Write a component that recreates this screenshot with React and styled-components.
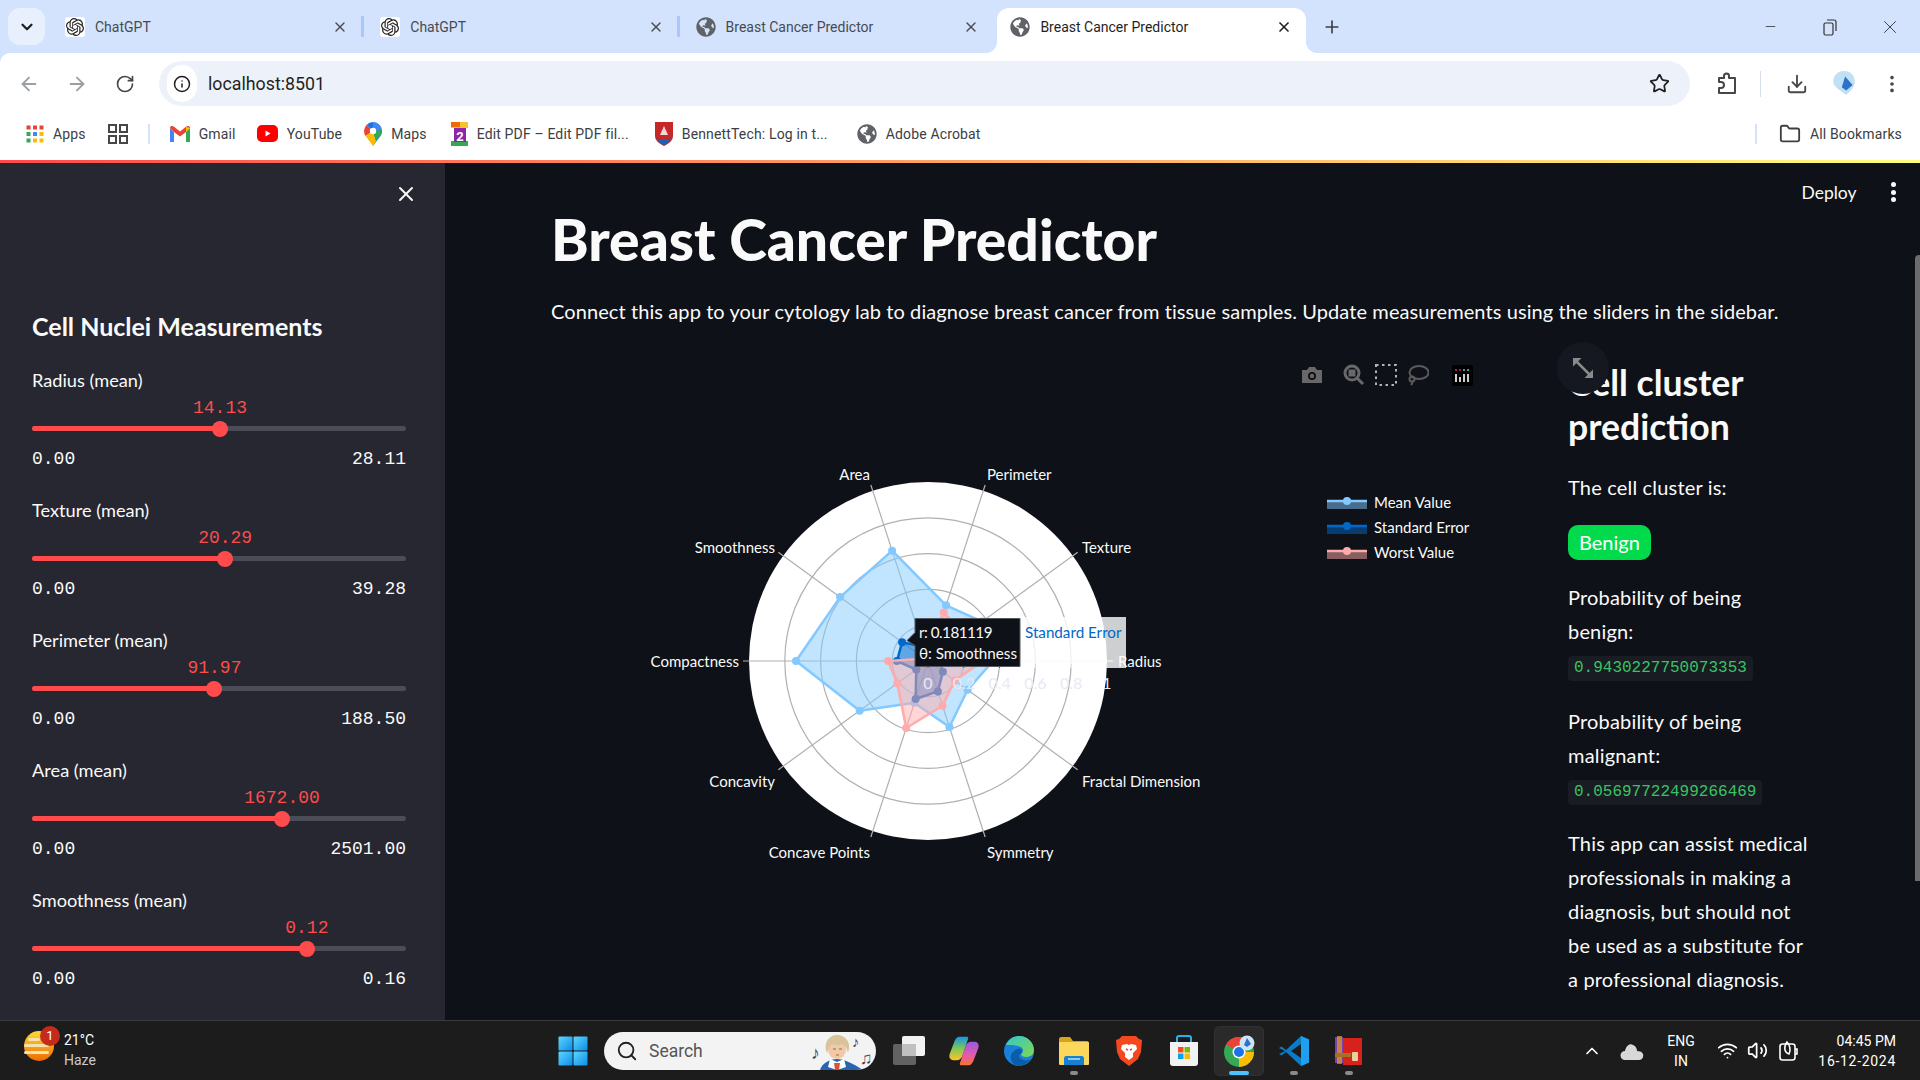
import React from 'react';
import styled, { createGlobalStyle } from 'styled-components';
import { SiOpenai } from 'react-icons/si';
import { FaGlobeAmericas } from 'react-icons/fa';
import { ArrowLeft, ArrowRight, RotateCw, Info, Star, Download, EllipsisVertical, X, Plus, Minus, ChevronDown, ChevronUp, Search, Folder, Wifi, Volume2 } from 'lucide-react';

const GlobalStyle = createGlobalStyle`
  html, body { margin: 0; padding: 0; width: 1920px; height: 1080px; overflow: hidden; }
  body { font-family: Lato, "Noto Sans", sans-serif; background: #0e1117; }
  * { box-sizing: border-box; }
`;

const Page = styled.div`
  width: 1920px;
  height: 1080px;
  display: flex;
  flex-direction: column;
  overflow: hidden;
  background: #d3e3fd;
`;

/* ---------- browser chrome ---------- */

const TabStrip = styled.div`
  height: 53px;
  background: #d3e3fd;
  display: flex;
  align-items: flex-end;
  padding-left: 8px;
  position: relative;
  font-family: Roboto, sans-serif;
`;

const TabSearch = styled.div`
  width: 37px;
  height: 37px;
  margin: 0 4px 8px 0;
  border-radius: 12px;
  background: #e9f0fd;
  display: flex;
  align-items: center;
  justify-content: center;
  color: #1f1f1f;
`;

const Tab = styled.div`
  width: ${p => p.$active ? '309px' : '315.3px'};
  height: 45px;
  margin-left: ${p => p.$active ? '2px' : '0'};
  padding: ${p => p.$active ? '0 14px 8px 13.5px' : '0 16px 8px 16px'};
  display: flex;
  align-items: center;
  gap: 10px;
  background: ${p => p.$active ? '#fff' : 'transparent'};
  border-radius: 12px 12px 0 0;
  position: relative;
  color: ${p => p.$active ? '#1f1f1f' : '#474b50'};
  font-size: 14px;
  ${p => p.$active && `
    &::before, &::after {
      content: '';
      position: absolute;
      bottom: 0;
      width: 12px;
      height: 12px;
    }
    &::before {
      left: -12px;
      background: radial-gradient(circle at 0 0, transparent 12px, #fff 12.5px);
    }
    &::after {
      right: -12px;
      background: radial-gradient(circle at 100% 0, transparent 12px, #fff 12.5px);
    }
  `}
`;

const TabDivider = styled.span`
  position: absolute;
  right: 0;
  top: 8px;
  width: 3px;
  height: 21px;
  background: #a8c7fa;
  border-radius: 1px;
`;

const TabTitle = styled.span`
  flex: 1;
  white-space: nowrap;
`;

const NewTab = styled.div`
  width: 20px;
  height: 20px;
  margin: 0 0 16px 16px;
  color: #3c4043;
  display: flex;
`;

const WindowControls = styled.div`
  position: absolute;
  right: 0;
  top: 0;
  height: 53px;
  width: 180px;
  display: flex;
  align-items: center;
  color: #333;
`;

const WinButton = styled.div`
  width: 60px;
  display: flex;
  justify-content: center;
`;

const Toolbar = styled.div`
  height: 54px;
  padding-top: 7px;
  background: #fff;
  border-radius: 10px 0 0 0;
  display: flex;
  align-items: center;
  font-family: Roboto, sans-serif;
`;

const NavButtons = styled.div`
  width: 159px;
  padding-left: 17px;
  display: flex;
  gap: 24px;
`;

const NavIcon = styled.div`
  width: 24px;
  height: 24px;
  display: flex;
  align-items: center;
  justify-content: center;
  color: ${p => p.$muted ? '#9aa0a6' : '#474747'};
`;

const Omnibox = styled.div`
  width: 1531px;
  height: 45px;
  background: #edf2fa;
  border-radius: 23px;
  display: flex;
  align-items: center;
  padding: 0 20px 0 8px;
`;

const SiteInfo = styled.div`
  width: 30px;
  height: 37px;
  border-radius: 18px;
  background: #fff;
  display: flex;
  align-items: center;
  justify-content: center;
  color: #1f1f1f;
`;

const Url = styled.span`
  margin-left: 11px;
  flex: 1;
  font-size: 17.8px;
  color: #1f1f1f;
`;

const ToolbarRight = styled.div`
  flex: 1;
  display: flex;
  align-items: center;
  padding-left: 25px;
  color: #474747;
`;

const ToolSep = styled.div`
  width: 1px;
  height: 26px;
  background: #d5dfee;
  margin: 0 25px 0 21px;
`;

const Bookmarks = styled.div`
  height: 53px;
  background: #fff;
  display: flex;
  align-items: center;
  padding: 0 18px 0 26px;
  font-family: Roboto, sans-serif;
  font-size: 14px;
  letter-spacing: 0.15px;
  color: #3c4043;
`;

const Bookmark = styled.div`
  display: flex;
  align-items: center;
  gap: ${p => p.$gap ?? 9}px;
  margin-right: ${p => p.$after ?? 24}px;
  white-space: nowrap;
`;

const BookSep = styled.div`
  width: 2px;
  height: 20px;
  background: #d3e3fd;
  margin: ${p => p.$margin};
`;

const Rainbow = styled.div`
  height: 3px;
  background: linear-gradient(90deg, rgb(255, 75, 75), rgb(255, 253, 128));
`;

/* ---------- streamlit app ---------- */

const AppBody = styled.div`
  flex: 1;
  min-height: 0;
  display: flex;
  position: relative;
  background: #0e1117;
  color: #fafafa;
`;

const Sidebar = styled.aside`
  width: 445px;
  flex: none;
  background: #262730;
  padding: 0 39px 0 32px;
  overflow: hidden;
`;

const SidebarTop = styled.div`
  height: 62px;
  display: flex;
  align-items: center;
  justify-content: flex-end;
  color: #fafafa;
  margin-right: -12px;
`;

const SidebarTitle = styled.h2`
  margin: 83px 0 23.5px;
  font-size: 25px;
  line-height: 36px;
  font-weight: 700;
  white-space: nowrap;
`;

const SliderList = styled.div`
  display: flex;
  flex-direction: column;
  gap: 27.1px;
`;

const SliderBlock = styled.div`
  display: flex;
  flex-direction: column;
`;

const SliderLabel = styled.label`
  height: 24px;
  line-height: 24px;
  font-size: 18.2px;
`;

const SliderArea = styled.div`
  height: 43px;
  position: relative;
`;

const SliderValue = styled.span`
  position: absolute;
  top: 5px;
  transform: translateX(-50%);
  font-family: "Liberation Mono", monospace;
  font-size: 18px;
  line-height: 22px;
  color: #ff4b4b;
`;

const Track = styled.div`
  position: absolute;
  left: 0;
  right: 0;
  bottom: 3.5px;
  height: 5px;
  border-radius: 3px;
  background: #4a4c58;
`;

const TrackFill = styled.div`
  height: 100%;
  border-radius: 3px;
  background: #ff4b4b;
`;

const Thumb = styled.div`
  position: absolute;
  top: -5.5px;
  width: 16px;
  height: 16px;
  margin-left: -8px;
  border-radius: 50%;
  background: #ff4b4b;
`;

const Limits = styled.div`
  margin-top: 12px;
  height: 24px;
  display: flex;
  justify-content: space-between;
  font-family: "Liberation Mono", monospace;
  font-size: 18px;
  line-height: 24px;
`;

const Main = styled.main`
  flex: 1;
  padding: 43px 0 0 106px;
  overflow: hidden;
`;

const Title = styled.h1`
  margin: 0;
  font-size: 57px;
  line-height: 66px;
  font-weight: 900;
  white-space: nowrap;
`;

const Lead = styled.p`
  margin: 22px 0 0;
  font-size: 20px;
  line-height: 34px;
  letter-spacing: 0.09px;
  white-space: nowrap;
`;

const Columns = styled.div`
  margin: 12px 0 0 1px;
  display: flex;
`;

const ChartColumn = styled.div`
  width: 1016px;
  height: 640px;
  flex: none;
  position: relative;
`;

const ModeBar = styled.div`
  position: absolute;
  top: 23px;
  left: 739px;
  display: flex;
  align-items: center;
`;

const ModeIcon = styled.div`
  width: ${p => p.$w}px;
  height: 24px;
  display: flex;
  align-items: center;
  justify-content: center;
`;

const Prediction = styled.section`
  padding-top: 21px;
  width: 260px;
  flex: none;
`;

const PredHeading = styled.h2`
  margin: 0 0 20.5px;
  font-size: 35.6px;
  line-height: 44px;
  font-weight: 700;
`;

const PredText = styled.p`
  margin: ${p => p.$top || 0}px 0 0;
  font-size: 20px;
  line-height: 34px;
  letter-spacing: 0.18px;
  white-space: nowrap;
`;

const Badge = styled.div`
  display: inline-block;
  margin-top: 21.5px;
  height: 35px;
  padding: 0 11px;
  line-height: 35px;
  font-size: 20px;
  border-radius: 10px;
  background: #01db4b;
  color: #fff;
`;

const CodeValue = styled.code`
  display: table;
  margin-top: 8px;
  height: 25px;
  padding: 0 6px;
  line-height: 25px;
  font-family: "Liberation Mono", monospace;
  font-size: 16px;
  border-radius: 4px;
  background: #1a1c24;
  color: #37c463;
`;

const Header = styled.div`
  position: absolute;
  top: 14px;
  right: 24.5px;
  height: 30px;
  display: flex;
  align-items: center;
  gap: 34px;
  font-size: 17.5px;
`;

const Kebab = styled.div`
  display: flex;
  flex-direction: column;
  gap: 2.5px;
  span { width: 5px; height: 5px; border-radius: 50%; background: #fafafa; }
`;

const FullscreenButton = styled.div`
  position: absolute;
  left: 1557px;
  top: 179px;
  width: 52px;
  height: 52px;
  border-radius: 50%;
  background: #151820;
  display: flex;
  align-items: center;
  justify-content: center;
`;

const ScrollThumb = styled.div`
  position: absolute;
  right: 0;
  top: 92px;
  width: 5px;
  height: 626px;
  background: #6b6b6e;
  border-radius: 4px 0 0 0;
`;

/* ---------- taskbar ---------- */

const Taskbar = styled.footer`
  height: 60px;
  flex: none;
  background: #1c1c1c;
  border-top: 1px solid #3a3a3a;
  display: flex;
  align-items: center;
  font-family: Roboto, sans-serif;
  color: #fff;
  position: relative;
`;

const Weather = styled.div`
  width: 550px;
  flex: none;
  padding-left: 24px;
  display: flex;
  align-items: center;
  gap: 9px;
`;

const WeatherIcon = styled.div`
  position: relative;
  width: 31px;
  height: 30px;
`;

const Notify = styled.span`
  position: absolute;
  left: 16px;
  top: -10px;
  width: 20px;
  height: 20px;
  border-radius: 50%;
  background: #c42b1c;
  font-size: 13px;
  line-height: 20px;
  text-align: center;
`;

const WeatherText = styled.div`
  font-size: 14px;
  line-height: 20px;
  margin-top: -1px;
  span { display: block; color: #ccc; }
`;

const StartCell = styled.div`
  width: 45px;
  margin-right: 9px;
  display: flex;
  justify-content: center;
`;

const SearchPill = styled.div`
  width: 272px;
  height: 38px;
  border-radius: 19px;
  background: #f3f3f3;
  display: flex;
  align-items: center;
  padding-left: 12px;
  gap: 11px;
  color: #555;
  font-size: 17.5px;
  position: relative;
  overflow: hidden;
`;

const SearchArt = styled.div`
  position: absolute;
  right: 0;
  top: 0;
  height: 38px;
  width: 70px;
`;

const Notes = styled.span`
  position: absolute;
  left: ${p => p.$x}px;
  top: ${p => p.$y}px;
  font-size: ${p => p.$size}px;
  color: #4a3a50;
  line-height: 1;
`;

const AppRow = styled.div`
  display: flex;
  align-items: center;
  margin-left: 5px;
`;

const AppCell = styled.div`
  width: 55px;
  height: 50px;
  display: flex;
  align-items: center;
  justify-content: center;
  position: relative;
  &::before {
    content: '';
    display: ${p => p.$current ? 'block' : 'none'};
    position: absolute;
    left: 2.5px;
    right: 2.5px;
    top: 0;
    bottom: 0;
    border-radius: 5px;
    background: #2a2a2a;
    border: 1px solid #303030;
  }
  svg { position: relative; }
`;

const RunDot = styled.span`
  position: absolute;
  bottom: 1px;
  left: 50%;
  width: ${p => p.$current ? 20 : 8}px;
  margin-left: ${p => p.$current ? -10 : -4}px;
  height: 4px;
  border-radius: 2px;
  background: ${p => p.$current ? '#4cc2ff' : '#8a8a8a'};
`;

const Tray = styled.div`
  position: absolute;
  right: 24px;
  top: 0;
  height: 59px;
  display: flex;
  align-items: center;
  font-size: 14px;
`;

const TrayStack = styled.div`
  text-align: ${p => p.$align};
  line-height: 20px;
  white-space: nowrap;
  margin-left: ${p => p.$left}px;
  font-size: ${p => p.$size || 14}px;
`;

const ClockDate = styled.span`
  letter-spacing: 0.7px;
`;

const TrayIcon = styled.div`
  display: flex;
  margin-left: ${p => p.$left}px;
`;

/* ---------- small drawings ---------- */

const FaviconBox = styled.div`
  width: 20px;
  height: 20px;
  display: flex;
  align-items: center;
  justify-content: center;
  flex: none;
  border-radius: 3px;
  background: ${p => p.$white ? '#fff' : 'transparent'};
  color: ${p => p.$white ? '#222' : '#5f6368'};
`;

const ChatFavicon = () => <FaviconBox $white><SiOpenai size={18} /></FaviconBox>;
const GlobeFavicon = () => <FaviconBox><FaGlobeAmericas size={20} /></FaviconBox>;

const ExtensionIcon = () => (
  <svg width="24" height="24" viewBox="0 0 24 24" fill="none" stroke="#474747" strokeWidth="2" strokeLinejoin="round">
    <path d="M4 6h5V4a2.500 2.500 0 0 1 5 0v2h6v15H4v-5h2a3 3 0 0 0 0-6H4z" />
  </svg>
);

const AppsIcon = () => (
  <svg width="18" height="18" viewBox="0 0 18 18">
    {['#ea4335', '#ea4335', '#ea4335', '#34a853', '#4285f4', '#fbbc05', '#34a853', '#fbbc05', '#fbbc05'].map((c, i) => (
      <rect key={i} x={(i % 3) * 6.5 + 0.5} y={Math.floor(i / 3) * 6.5 + 0.5} width="4" height="4" fill={c} />
    ))}
  </svg>
);

const GroupIcon = () => (
  <svg width="20" height="20" viewBox="0 0 20 20" fill="none" stroke="#474747" strokeWidth="2">
    <rect x="1" y="1" width="7" height="7" /><rect x="12" y="1" width="7" height="7" />
    <rect x="1" y="12" width="7" height="7" /><rect x="12" y="12" width="7" height="7" />
  </svg>
);

const GmailIcon = () => (
  <svg width="20" height="16" viewBox="0 0 20 16">
    <path d="M0 2v14h4V6z" fill="#4285f4" />
    <path d="M20 2v14h-4V6z" fill="#34a853" />
    <path d="M0 2c0-2 2.500-2.500 4-1.300L10 5.500 16 .7C17.500-.5 20 0 20 2l-4 4-6 4.500L4 6z" fill="#ea4335" />
    <path d="M16 .7 20 2l-4 4z" fill="#fbbc05" />
  </svg>
);

const YoutubeIcon = () => (
  <svg width="21" height="21" viewBox="0 0 21 21">
    <rect x="0" y="2" width="21" height="17" rx="5" fill="#f00" />
    <path d="M8.500 7.500v6l5-3z" fill="#fff" />
  </svg>
);

const MapsIcon = () => (
  <svg width="18" height="24" viewBox="0 0 18 24">
    <path d="M9 0a9 9 0 0 1 7.500 14L9 24z" fill="#4285f4" />
    <path d="M9 0A9 9 0 0 0 2.500 3L9 9z" fill="#1a73e8" />
    <path d="M2.500 3A9 9 0 0 0 1.500 14L9 9z" fill="#ea4335" />
    <path d="M1.500 14 9 24l3-5-3-10z" fill="#fbbc05" />
    <path d="M9 9 12 19l4.500-5a9 9 0 0 0 1-6z" fill="#34a853" />
    <circle cx="9" cy="9" r="3.200" fill="#fff" />
  </svg>
);

const PdfIcon = () => (
  <svg width="17" height="24" viewBox="0 0 17 24">
    <rect x="0" y="0" width="17" height="24" fill="#fbc02d" />
    <rect x="0" y="18" width="17" height="6" fill="#34a853" />
    <rect x="0" y="6" width="17" height="13" fill="#fff" />
    <rect x="0" y="0" width="9" height="5" fill="#ef6c00" />
    <rect x="3" y="6" width="12" height="14" fill="#8e24aa" />
    <text x="9" y="18.500" fontSize="13" fontWeight="700" fontFamily="Roboto, sans-serif" fill="#fff" textAnchor="middle">2</text>
  </svg>
);

const BennettIcon = () => (
  <svg width="18" height="24" viewBox="0 0 18 24">
    <path d="M0 0h18v14c0 5-5 8-9 10-4-2-9-5-9-10z" fill="#c62828" />
    <path d="M2 16c4 3 10 3 14 0-1 3-4 6-7 7-3-1-6-4-7-7z" fill="#1565c0" />
    <path d="M9 4 5 13h8z" fill="#fff" opacity=".8" />
  </svg>
);

const WindowsLogo = () => (
  <svg width="30" height="30" viewBox="0 0 30 30">
    <defs>
      <linearGradient id="winTile" x1="0" y1="0" x2="1" y2="1">
        <stop offset="0" stopColor="#5fd4ff" /><stop offset="1" stopColor="#0a8fe8" />
      </linearGradient>
    </defs>
    <rect x="0.500" y="0.500" width="14" height="14" rx="1" fill="url(#winTile)" />
    <rect x="15.500" y="0.500" width="14" height="14" rx="1" fill="url(#winTile)" />
    <rect x="0.500" y="15.500" width="14" height="14" rx="1" fill="url(#winTile)" />
    <rect x="15.500" y="15.500" width="14" height="14" rx="1" fill="url(#winTile)" />
  </svg>
);

const SunHaze = () => (
  <svg width="31" height="36" viewBox="0 0 31 36" style={{ marginTop: -6 }}>
    <defs>
      <linearGradient id="sunFill" x1="0" y1="0" x2="0" y2="1">
        <stop offset="0" stopColor="#fdd835" /><stop offset="1" stopColor="#ef6c00" />
      </linearGradient>
    </defs>
    <circle cx="15" cy="16" r="15" fill="url(#sunFill)" />
    <rect x="4" y="8" width="12" height="3" rx="1.500" fill="#f3e2b0" />
    <rect x="0" y="14" width="25" height="3" rx="1.500" fill="#f3e2b0" />
    <rect x="0" y="21" width="25" height="3" rx="1.500" fill="#f3e2b0" />
  </svg>
);

const Composer = () => (
  <svg width="70" height="38" viewBox="0 0 70 38">
    <path d="M14 38c2-7 10-11 17-11s15 4 26 11z" fill="#2a66b0" />
    <path d="M24 27l7 3 7-3 2 8-9 3-9-3z" fill="#fff" />
    <path d="M28 31h6l-1 7h-4z" fill="#d9533b" />
    <circle cx="31" cy="18" r="9" fill="#f1c9a5" />
    <path d="M21 21C17 11 23 3 31 3s15 7 11 18c-1-5-3-8-6-9-4 2-8 1-10 0-2 2-4 5-5 9z" fill="#d9c39a" />
    <path d="M27 17h3M33 17h3" stroke="#5a7a9a" strokeWidth="1.200" />
    <path d="M30 23h3" stroke="#b4604a" strokeWidth="1.200" />
  </svg>
);

const TaskView = () => (
  <svg width="32" height="30" viewBox="0 0 32 30">
    <rect x="9" y="0" width="23" height="20" rx="2" fill="#f2f2f2" />
    <rect x="0" y="8" width="23" height="21" rx="2" fill="#6a6a6a" opacity=".9" />
    <rect x="9" y="8" width="14" height="12" fill="#c0c0c0" />
  </svg>
);

const Copilot = () => (
  <svg width="30" height="30" viewBox="0 0 30 30" strokeWidth="2.500" strokeLinejoin="round">
    <defs>
      <linearGradient id="copA" x1="0" y1="0" x2="0" y2="1">
        <stop offset="0" stopColor="#1f9ad6" /><stop offset=".5" stopColor="#7dc855" /><stop offset="1" stopColor="#f5c231" />
      </linearGradient>
      <linearGradient id="copB" x1="0" y1="0" x2="0" y2="1">
        <stop offset="0" stopColor="#a05ae0" /><stop offset=".6" stopColor="#e85aa8" /><stop offset="1" stopColor="#f5703c" />
      </linearGradient>
    </defs>
    <path d="M10 2h8l-6 18c-1 2-2 3-4 3H4C2 23 1 21 2 18L7 5c1-2 2-3 3-3z" fill="url(#copA)" stroke="url(#copA)" />
    <path d="M20 28h-8l6-18c1-2 2-3 4-3h4c2 0 3 2 2 5l-5 13c-1 2-2 3-3 3z" fill="url(#copB)" stroke="url(#copB)" />
  </svg>
);

const Edge = () => (
  <svg width="30" height="30" viewBox="0 0 30 30">
    <defs>
      <linearGradient id="edgeA" x1="0" y1="0" x2="1" y2="1">
        <stop offset="0" stopColor="#34c8c8" /><stop offset="1" stopColor="#7fd850" />
      </linearGradient>
    </defs>
    <circle cx="15" cy="15" r="15" fill="#1a7fd8" />
    <path d="M2 9C5 2 11 0 15 0c9 0 15 7 15 14 0 5-4 7-8 7-3 0-5-1-5-3 2-1 3-4 1-6-3-3-10-3-16-3z" fill="url(#edgeA)" />
    <path d="M14 30C8 29 5 22 8 17c2-3 6-5 9-4 1 1 1 3 0 5-2 0-3 2-1 4 3 3 8 3 11 1-3 4-8 7-13 7z" fill="#0b5da8" />
  </svg>
);

const Explorer = () => (
  <svg width="30" height="28" viewBox="0 0 30 28">
    <path d="M0 2c0-1 1-2 2-2h9l3 4h14c1 0 2 1 2 2v4H0z" fill="#dba316" />
    <rect x="0" y="5" width="30" height="23" rx="1" fill="#fbd75b" />
    <path d="M5 28v-7c0-1 1-2 2-2h16c1 0 2 1 2 2v7z" fill="#1980d0" />
    <rect x="9" y="21" width="12" height="2" fill="#8ac8f0" />
  </svg>
);

const Brave = () => (
  <svg width="26" height="30" viewBox="0 0 26 30">
    <path d="M6 0h14l3 3 3 1-1 12-3 7-9 7-9-7-3-7L0 4l3-1z" fill="#f5481e" />
    <path d="M6 9l5-1 2 1 2-1 5 1 1 4-4 4 0 4-4 3-4-3 0-4-4-4z" fill="#fff" />
    <path d="M10 13l2 1M16 13l-2 1" stroke="#f5481e" strokeWidth="1.500" />
  </svg>
);

const Store = () => (
  <svg width="30" height="32" viewBox="0 0 30 32">
    <path d="M8 7V3c0-1 1-2 2-2h10c1 0 2 1 2 2v4" fill="none" stroke="#2bb0e8" strokeWidth="2" />
    <path d="M1 7h28v21c0 2-1 3-3 3H4c-2 0-3-1-3-3z" fill="#f2f2f2" />
    <rect x="9" y="12" width="5.500" height="5.500" fill="#f25022" />
    <rect x="15.500" y="12" width="5.500" height="5.500" fill="#7fba00" />
    <rect x="9" y="18.500" width="5.500" height="5.500" fill="#00a4ef" />
    <rect x="15.500" y="18.500" width="5.500" height="5.500" fill="#ffb900" />
  </svg>
);

const Chrome = () => (
  <svg width="32" height="32" viewBox="0 0 32 32">
    <circle cx="16" cy="17" r="15" fill="#34a853" />
    <path d="M16 17 3 9.500A15 15 0 0 1 29 9.500z" fill="#ea4335" />
    <path d="M16 17h15a15 15 0 0 1-15 15z" fill="#fbbc05" />
    <circle cx="16" cy="17" r="6.500" fill="#fff" />
    <circle cx="16" cy="17" r="5" fill="#1a73e8" />
    <circle cx="24" cy="8" r="7.500" fill="#cfe4f7" />
    <path d="M24 3l4 6-4 3-3-2z" fill="#2b72c8" />
  </svg>
);

const VSCode = () => (
  <svg width="30" height="30" viewBox="0 0 30 30">
    <path d="M22 0 30 3.500v23L22 30 7 16l-4.500 3.500L0 18l6-3-6-3 2.500-1.500L7 14z" fill="#0a7bc7" />
    <path d="M22 0 30 3.500v23L22 30z" fill="#1ea0ef" />
    <path d="M22 8 12 15l10 7z" fill="#1c1c1c" />
  </svg>
);

const RarBooks = () => (
  <svg width="28" height="30" viewBox="0 0 28 30">
    <rect x="0" y="1" width="8" height="26" fill="#7b3fb0" />
    <rect x="2" y="0" width="5" height="28" fill="#e0a020" opacity=".7" />
    <rect x="8" y="2" width="19" height="27" fill="#d8211c" />
    <rect x="0" y="17" width="16" height="4" fill="#a9701e" />
    <rect x="17" y="16" width="6" height="9" rx="1" fill="#e8d0a0" />
  </svg>
);

const CameraIcon = () => (
  <svg width="22" height="20" viewBox="0 0 22 20">
    <path d="M1 5h5l2-3h6l2 3h5v13H1z" fill="#686868" />
    <circle cx="11" cy="11" r="4" fill="#0e1117" />
    <circle cx="11" cy="11" r="2.200" fill="#686868" />
  </svg>
);

const ZoomIcon = () => (
  <svg width="22" height="22" viewBox="0 0 22 22" fill="none">
    <circle cx="9" cy="9" r="7" stroke="#686868" strokeWidth="3" />
    <rect x="5.500" y="5.500" width="7" height="7" fill="#686868" />
    <path d="M14 14l6 6" stroke="#686868" strokeWidth="3" />
  </svg>
);

const BoxSelectIcon = () => (
  <svg width="22" height="22" viewBox="0 0 22 22" fill="none">
    <rect x="1" y="1" width="20" height="20" stroke="#b4b4b4" strokeWidth="2" strokeDasharray="2.500 3.500" />
  </svg>
);

const LassoIcon = () => (
  <svg width="22" height="22" viewBox="0 0 22 22" fill="none" stroke="#5a5a5a" strokeWidth="2">
    <ellipse cx="12" cy="8.500" rx="9.500" ry="6.500" />
    <circle cx="5" cy="15" r="2.500" />
    <path d="M5 17c1 2 0 3-1 4" />
  </svg>
);

const PlotlyLogo = () => (
  <svg width="21" height="21" viewBox="0 0 21 21">
    <rect width="21" height="21" rx="2" fill="#000" />
    {[[4, '#e8196f'], [8, '#e8196f'], [12, '#68c8e8'], [16, '#68c8e8']].map(([x, c]) => (
      <circle key={x} cx={x} cy="5" r="1" fill={c} />
    ))}
    {[[4, 9], [8, 12], [12, 9], [16, 9]].map(([x, y]) => (
      <rect key={x} x={x - 0.8} y={y} width="1.600" height={17 - y} fill="#fff" />
    ))}
  </svg>
);

const ExpandIcon = () => (
  <svg width="22" height="22" viewBox="0 0 22 22" fill="#8a8a8a">
    <path d="M1 1h8.500L1 9.500z" />
    <path d="M21 21h-8.500l8.500-8.500z" />
    <path d="M4 4l14 14" stroke="#8a8a8a" strokeWidth="2.500" />
  </svg>
);

const BatteryLeaf = () => (
  <svg width="22" height="24" viewBox="0 0 22 24" fill="none" stroke="#fff" strokeWidth="1.600">
    <rect x="3" y="5" width="15" height="16" rx="2.500" />
    <path d="M18 10h2v5h-2M10 3c3 3 4 8 2 12-4-1-6-6-2-12z" />
  </svg>
);

const CloudIcon = () => (
  <svg width="24" height="20" viewBox="0 0 24 20">
    <path d="M5 19a4.500 4.500 0 0 1 0-9c1-5 5-8 8-6 3 1 4 4 4 6 5 0 7 3 6 6-.5 2-2 3-4 3z" fill="#d8d8d8" />
  </svg>
);

/* ---------- radar chart, drawn in page coordinates ---------- */

const CX = 928;
const CY = 661;
const R = 179;
const AXES = [
  { name: 'Radius', x: 1118, y: 662, anchor: 'start' },
  { name: 'Texture', x: 1082, y: 548, anchor: 'start' },
  { name: 'Perimeter', x: 987, y: 475, anchor: 'start' },
  { name: 'Area', x: 870, y: 475, anchor: 'end' },
  { name: 'Smoothness', x: 775, y: 548, anchor: 'end' },
  { name: 'Compactness', x: 739, y: 662, anchor: 'end' },
  { name: 'Concavity', x: 775, y: 782, anchor: 'end' },
  { name: 'Concave Points', x: 870, y: 853, anchor: 'end' },
  { name: 'Symmetry', x: 987, y: 853, anchor: 'start' },
  { name: 'Fractal Dimension', x: 1082, y: 782, anchor: 'start' },
];

const polar = (dist, i) => {
  const a = (i * 36 * Math.PI) / 180;
  return [CX + dist * Math.cos(a), CY - dist * Math.sin(a)];
};

// distances read off the plot, in px from the centre
const TRACES = [
  { color: '#83c9ff', values: [65, 67, 58.6, 116, 108.7, 132, 84.5, 44, 69.4, 49] },
  { color: '#0068c9', values: [12, 10, 12, 15, 32, 31, 14.500, 40, 32, 18.400] },
  { color: '#ffabab', values: [55, 45, 51, 8, 4, 40, 38, 70.500, 47, 33] },
];

const Legend = [
  { name: 'Mean Value', color: '#83c9ff', y: 503 },
  { name: 'Standard Error', color: '#0068c9', y: 528 },
  { name: 'Worst Value', color: '#ffabab', y: 553 },
];

const ChartText = styled.text`
  font-family: Lato, sans-serif;
  font-size: ${p => p.$size || 15}px;
  letter-spacing: ${p => p.$spacing || 0}px;
  fill: ${p => p.$fill || '#fafafa'};
`;

function RadarChart() {
  return (
    <svg width="1016" height="640" viewBox="552 340 1016 640">
      <circle cx={CX} cy={CY} r={R} fill="#fff" />
      {[0.2, 0.4, 0.6, 0.8].map(t => (
        <circle key={t} cx={CX} cy={CY} r={R * t} fill="none" stroke="#b0b0b0" strokeWidth="1.200" />
      ))}
      {AXES.map((a, i) => {
        const [x, y] = polar(R + 6, i);
        return <line key={a.name} x1={CX} y1={CY} x2={x} y2={y} stroke={i === 0 ? '#e4e4e4' : '#b0b0b0'} strokeWidth="1.200" />;
      })}
      {TRACES.map(t => {
        const pts = t.values.map((v, i) => polar(v, i));
        return (
          <g key={t.color}>
            <polygon points={pts.map(p => p.join(',')).join(' ')} fill={t.color} fillOpacity=".5" stroke={t.color} strokeWidth="2.500" strokeLinejoin="round" />
            {pts.map((p, i) => <circle key={i} cx={p[0]} cy={p[1]} r="4" fill={t.color} />)}
          </g>
        );
      })}
      {[0, 0.2, 0.4, 0.6, 0.8, 1].map(t => (
        <g key={t}>
          <line x1={CX + R * t} y1={664} x2={CX + R * t} y2={668} stroke="#555" strokeWidth="1" />
          <ChartText x={CX + R * t} y={689} textAnchor="middle" $size={16} $fill="#e6eaf5">{t}</ChartText>
        </g>
      ))}
      {AXES.map(a => (
        <ChartText key={a.name} x={a.x} y={a.y + 5} textAnchor={a.anchor}>{a.name}</ChartText>
      ))}
      {Legend.map(l => (
        <g key={l.name}>
          <rect x="1327" y={l.y - 3} width="40" height="9" fill={l.color} fillOpacity=".5" />
          <line x1="1327" y1={l.y - 2} x2="1367" y2={l.y - 2} stroke={l.color} strokeWidth="2.500" />
          <circle cx="1347" cy={l.y - 2} r="4" fill={l.color} />
          <ChartText x="1374" y={l.y + 5}>{l.name}</ChartText>
        </g>
      ))}
      <rect x="1020" y="617" width="106" height="51" fill="#fff" fillOpacity=".8" />
      <path d="M915 618.500h105v48h-105v-21l-8-5 8-8z" fill="#0e1117" stroke="#55585f" strokeWidth="1" />
      <ChartText x="919" y="638" $size={15.2} $spacing={-0.5}>r: 0.181119</ChartText>
      <ChartText x="919" y="659" $size={15.2}>θ: Smoothness</ChartText>
      <ChartText x="1025" y="638" $size={15.2} $fill="#0068c9">Standard Error</ChartText>
    </svg>
  );
}

/* ---------- data ---------- */

const SLIDERS = [
  { label: 'Radius (mean)', value: '14.13', max: '28.11', frac: 0.5027 },
  { label: 'Texture (mean)', value: '20.29', max: '39.28', frac: 0.5165 },
  { label: 'Perimeter (mean)', value: '91.97', max: '188.50', frac: 0.4879 },
  { label: 'Area (mean)', value: '1672.00', max: '2501.00', frac: 0.6685 },
  { label: 'Smoothness (mean)', value: '0.12', max: '0.16', frac: 0.735 },
];

function Slider({ label, value, max, frac }) {
  const pct = `${frac * 100}%`;
  return (
    <SliderBlock>
      <SliderLabel>{label}</SliderLabel>
      <SliderArea>
        <SliderValue style={{ left: pct }}>{value}</SliderValue>
        <Track>
          <TrackFill style={{ width: pct }} />
          <Thumb style={{ left: pct }} />
        </Track>
      </SliderArea>
      <Limits><span>0.00</span><span>{max}</span></Limits>
    </SliderBlock>
  );
}

export default function App() {
  return (
    <Page>
      <GlobalStyle />
      <TabStrip>
        <TabSearch><ChevronDown size={18} strokeWidth={3} /></TabSearch>
        <Tab><ChatFavicon /><TabTitle>ChatGPT</TabTitle><X size={16} /><TabDivider /></Tab>
        <Tab><ChatFavicon /><TabTitle>ChatGPT</TabTitle><X size={16} /><TabDivider /></Tab>
        <Tab><GlobeFavicon /><TabTitle>Breast Cancer Predictor</TabTitle><X size={16} /></Tab>
        <Tab $active><GlobeFavicon /><TabTitle>Breast Cancer Predictor</TabTitle><X size={16} strokeWidth={2.5} /></Tab>
        <NewTab><Plus size={20} /></NewTab>
        <WindowControls>
          <WinButton><Minus size={15} strokeWidth={1.3} /></WinButton>
          <WinButton><svg width="14" height="18" viewBox="0 0 14 18" fill="none" stroke="#333" strokeWidth="1.200"><rect x="1" y="5" width="9" height="12" rx="1.500" /><path d="M4 2h7c1 0 2 1 2 2v9" /></svg></WinButton>
          <WinButton><X size={22} strokeWidth={1} /></WinButton>
        </WindowControls>
      </TabStrip>
      <Toolbar>
        <NavButtons>
          <NavIcon $muted><ArrowLeft size={22} /></NavIcon>
          <NavIcon $muted><ArrowRight size={22} /></NavIcon>
          <NavIcon><RotateCw size={20} /></NavIcon>
        </NavButtons>
        <Omnibox>
          <SiteInfo><Info size={18} /></SiteInfo>
          <Url>localhost:8501</Url>
          <Star size={21} color="#1f1f1f" />
        </Omnibox>
        <ToolbarRight>
          <ExtensionIcon />
          <ToolSep />
          <Download size={22} />
          <svg width="28" height="26" viewBox="0 0 26 24" style={{ marginLeft: 22 }}>
            <path d="M13 0c6 0 10 4 10 10 0 5-4 9-8 12C11 19 3 15 3 10 3 4 7 0 13 0z" fill="#bfe0f5" />
            <path d="M14 5l7 8-6 5-4-3z" fill="#2b72c8" />
          </svg>
          <EllipsisVertical size={22} style={{ marginLeft: 23 }} />
        </ToolbarRight>
      </Toolbar>
      <Bookmarks>
        <Bookmark $after={22}><AppsIcon /><span>Apps</span></Bookmark>
        <GroupIcon />
        <BookSep $margin="0 20px 0 20px" />
        <Bookmark $after={21}><GmailIcon /><span>Gmail</span></Bookmark>
        <Bookmark $after={22}><YoutubeIcon /><span>YouTube</span></Bookmark>
        <Bookmark><MapsIcon /><span>Maps</span></Bookmark>
        <Bookmark $after={26}><PdfIcon /><span>Edit PDF – Edit PDF fil...</span></Bookmark>
        <Bookmark $after={29}><BennettIcon /><span>BennettTech: Log in t...</span></Bookmark>
        <Bookmark><FaviconBox><FaGlobeAmericas size={20} /></FaviconBox><span>Adobe Acrobat</span></Bookmark>
        <BookSep $margin="0 22px 0 auto" />
        <Bookmark $after={0}><Folder size={22} /><span>All Bookmarks</span></Bookmark>
      </Bookmarks>
      <Rainbow />
      <AppBody>
        <Sidebar>
          <SidebarTop><X size={24} strokeWidth={2} /></SidebarTop>
          <SidebarTitle>Cell Nuclei Measurements</SidebarTitle>
          <SliderList>
            {SLIDERS.map(s => <Slider key={s.label} {...s} />)}
          </SliderList>
        </Sidebar>
        <Main>
          <Title>Breast Cancer Predictor</Title>
          <Lead>Connect this app to your cytology lab to diagnose breast cancer from tissue samples. Update measurements using the sliders in the sidebar.</Lead>
          <Columns>
            <ChartColumn>
              <RadarChart />
              <ModeBar>
                <ModeIcon $w={42}><CameraIcon /></ModeIcon>
                <ModeIcon $w={42}><ZoomIcon /></ModeIcon>
                <ModeIcon $w={22}><BoxSelectIcon /></ModeIcon>
                <ModeIcon $w={42}><LassoIcon /></ModeIcon>
                <ModeIcon $w={46}><PlotlyLogo /></ModeIcon>
              </ModeBar>
            </ChartColumn>
            <Prediction>
              <PredHeading>Cell cluster<br />prediction</PredHeading>
              <PredText>The cell cluster is:</PredText>
              <Badge>Benign</Badge>
              <PredText $top={20}>Probability of being<br />benign:</PredText>
              <CodeValue>0.9430227750073353</CodeValue>
              <PredText $top={22.5}>Probability of being<br />malignant:</PredText>
              <CodeValue>0.05697722499266469</CodeValue>
              <PredText $top={21}>This app can assist medical<br />professionals in making a<br />diagnosis, but should not<br />be used as a substitute for<br />a professional diagnosis.</PredText>
            </Prediction>
          </Columns>
        </Main>
        <FullscreenButton><ExpandIcon /></FullscreenButton>
        <Header>
          <span>Deploy</span>
          <Kebab><span /><span /><span /></Kebab>
        </Header>
        <ScrollThumb />
      </AppBody>
      <Taskbar>
        <Weather>
          <WeatherIcon><SunHaze /><Notify>1</Notify></WeatherIcon>
          <WeatherText>21°C<span>Haze</span></WeatherText>
        </Weather>
        <StartCell><WindowsLogo /></StartCell>
        <SearchPill>
          <Search size={22} color="#222" />
          <span>Search</span>
          <SearchArt>
            <Composer />
            <Notes $x={5} $y={12} $size={18}>♪</Notes>
            <Notes $x={46} $y={3} $size={15}>♪</Notes>
            <Notes $x={54} $y={18} $size={17}>♫</Notes>
          </SearchArt>
        </SearchPill>
        <AppRow>
          <AppCell><TaskView /></AppCell>
          <AppCell><Copilot /></AppCell>
          <AppCell><Edge /></AppCell>
          <AppCell><Explorer /><RunDot /></AppCell>
          <AppCell><Brave /></AppCell>
          <AppCell><Store /></AppCell>
          <AppCell $current><Chrome /><RunDot $current /></AppCell>
          <AppCell><VSCode /><RunDot /></AppCell>
          <AppCell><RarBooks /><RunDot /></AppCell>
        </AppRow>
        <Tray>
          <TrayIcon $left={0}><ChevronUp size={20} /></TrayIcon>
          <TrayIcon $left={17.4}><CloudIcon /></TrayIcon>
          <TrayStack $align="center" $left={23.4}>ENG<br />IN</TrayStack>
          <TrayIcon $left={22}><Wifi size={21} /></TrayIcon>
          <TrayIcon $left={9}><Volume2 size={21} /></TrayIcon>
          <TrayIcon $left={9.2}><BatteryLeaf /></TrayIcon>
          <TrayStack $align="right" $left={19.4}>04:45 PM<br /><ClockDate>16-12-2024</ClockDate></TrayStack>
        </Tray>
      </Taskbar>
    </Page>
  );
}
